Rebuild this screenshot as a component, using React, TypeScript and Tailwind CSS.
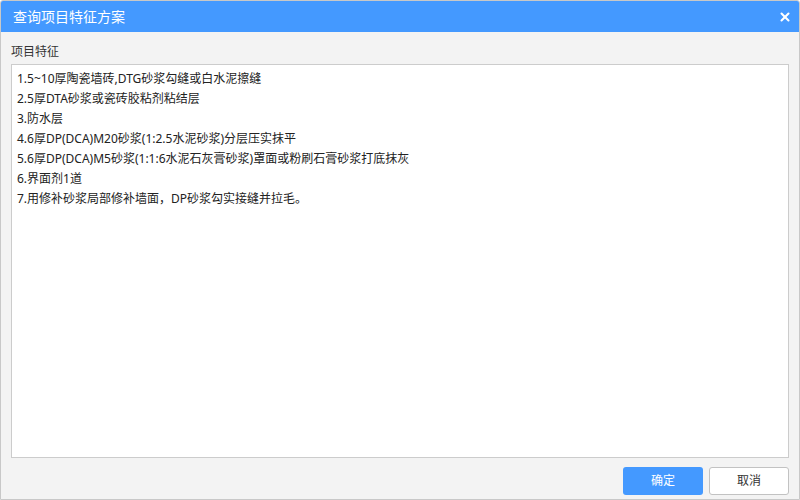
import { X } from "lucide-react";

const LINES = [
  "1.5~10厚陶瓷墙砖,DTG砂浆勾缝或白水泥擦缝",
  "2.5厚DTA砂浆或瓷砖胶粘剂粘结层",
  "3.防水层",
  "4.6厚DP(DCA)M20砂浆(1:2.5水泥砂浆)分层压实抹平",
  "5.6厚DP(DCA)M5砂浆(1:1:6水泥石灰膏砂浆)罩面或粉刷石膏砂浆打底抹灰",
  "6.界面剂1道",
  "7.用修补砂浆局部修补墙面，DP砂浆勾实接缝并拉毛。",
];

const FONT = "font-['Noto_Sans','Noto_Sans_CJK_SC',sans-serif]";

export default function App() {
  return (
    <div className={`w-[800px] h-[500px] flex flex-col bg-[#f3f3f3] border border-[#c8c8c8] rounded-t-[3px] overflow-hidden ${FONT}`}>
      <div className="h-[31px] shrink-0 bg-[#4499ff] flex items-center justify-between pl-3 pr-[7px]">
        <span className="text-white text-[14px]">查询项目特征方案</span>
        <X size={14} strokeWidth={3.5} className="text-white" />
      </div>
      <div className="flex-1 flex flex-col px-[10px] pt-[9px]">
        <div className="text-[12px] text-[#333] leading-[20px] h-[23px] pt-px">项目特征</div>
        <div className="h-[394px] bg-white border border-[#cccccc] px-[5px] pt-[4px]">
          {LINES.map((line) => (
            <div key={line} className="text-[12px] leading-[20px] text-[#222]">
              {line}
            </div>
          ))}
        </div>
        <div className="flex justify-end gap-[6px] mt-[9px]">
          <button className="w-[80px] h-[28px] rounded-[3px] bg-[#4499ff] text-white text-[12px]">
            确定
          </button>
          <button className="w-[80px] h-[28px] rounded-[3px] bg-white border border-[#c2c2c2] text-[#333] text-[12px]">
            取消
          </button>
        </div>
      </div>
    </div>
  );
}
